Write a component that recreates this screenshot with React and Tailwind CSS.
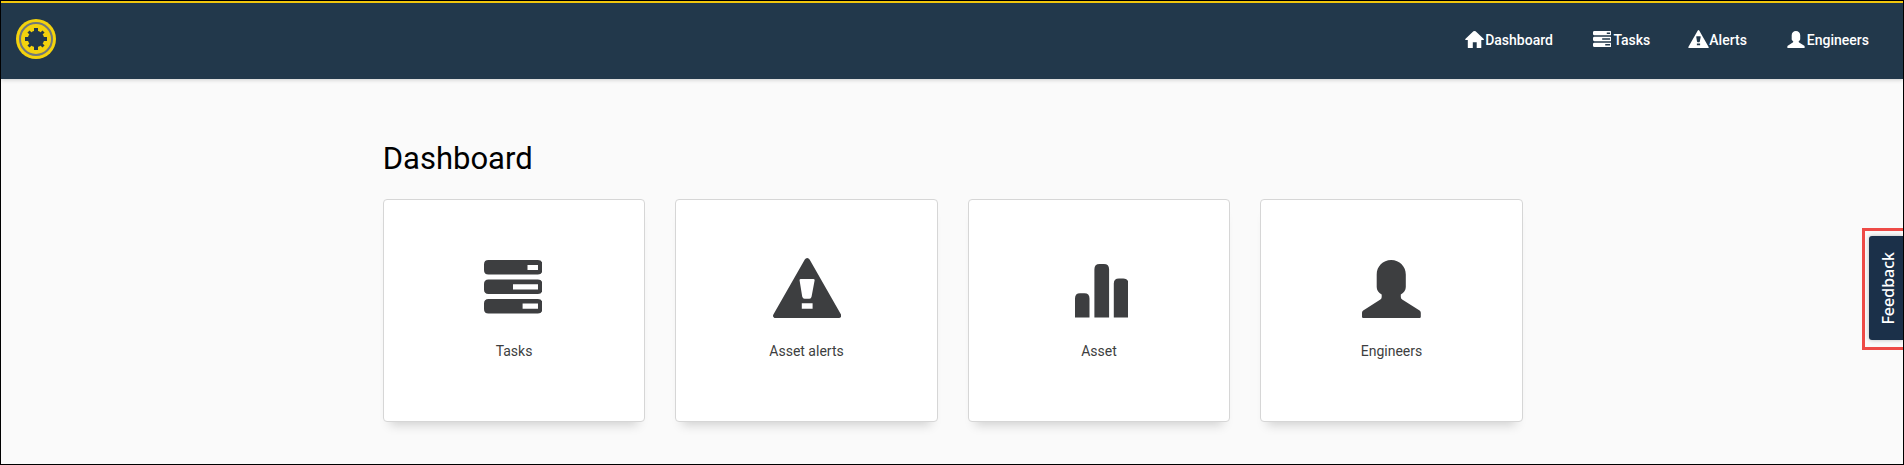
const HomeIcon = (p) => (
  <svg viewBox="0 0 19 17" {...p}>
    <path fill="currentColor" d="M9.5 0 L10.6 0.3 L18.8 8 Q19.2 9 18.2 9 H16.3 V16.5 Q16.3 17 15.8 17 H11.7 V11.3 H7.8 V17 H3.4 Q2.8 17 2.8 16.4 V9 H0.8 Q-0.2 9 0.3 8 L8.4 0.3 Z" />
  </svg>
);

const TasksIcon = (p) => (
  <svg viewBox="0 0 58.4 53.6" preserveAspectRatio="none" {...p}>
    <path
      fill="currentColor"
      fillRule="evenodd"
      d="M4.5 0H53.9Q58.4 0 58.4 4.5V10Q58.4 14.5 53.9 14.5H4.5Q0 14.5 0 10V4.5Q0 0 4.5 0ZM43.5 5V10H54V5ZM4.5 19.5H53.9Q58.4 19.5 58.4 24V29.5Q58.4 34 53.9 34H4.5Q0 34 0 29.5V24Q0 19.5 4.5 19.5ZM29 24.3V29.4H54V24.3ZM4.5 39H53.9Q58.4 39 58.4 43.5V49Q58.4 53.5 53.9 53.5H4.5Q0 53.5 0 49V43.5Q0 39 4.5 39ZM38.6 43.4V48.8H54V43.4Z"
    />
  </svg>
);

const AlertIcon = (p) => (
  <svg viewBox="0 0 68.4 60" {...p}>
    <path
      fill="currentColor"
      fillRule="evenodd"
      d="M34.2 0Q35.7 0 36.6 1.6L68 56.6Q69 58.4 67.4 59.6Q67 60 66.2 60H2.2Q1.4 60 .9 59.5Q-.6 58.4 .4 56.6L31.8 1.6Q32.7 0 34.2 0ZM27.8 21Q26.4 21 26.6 22.4L29.2 38.6Q29.8 40.8 31.6 40.8H36.4Q38.2 40.8 38.6 38.6L41.6 22.4Q41.8 21 40.4 21ZM28.8 45.2V50.8H39.6V45.2Z"
    />
  </svg>
);

const BarsIcon = (p) => (
  <svg viewBox="0 0 53.4 53.6" {...p}>
    <path
      fill="currentColor"
      d="M0 53.6V34.4Q0 29.2 5 29.2H9.4Q14.5 29.2 14.5 34.4V53.6ZM19.4 53.6V5.2Q19.4 0 24.6 0H28.9Q34.1 0 34.1 5.2V53.6ZM38.8 53.6V19.6Q38.8 14.6 44 14.6H48.2Q53.4 14.6 53.4 19.6V53.6Z"
    />
  </svg>
);

const UserIcon = (p) => (
  <svg viewBox="0 0 58.8 58" {...p}>
    <path
      fill="currentColor"
      d="M29.2 0C37.6 0 43.8 6.4 43.8 14.6V27C43.8 30.2 42 33 38.8 34.4V37Q38.8 38.6 40.2 39.4L57.6 50.6Q58.8 51.4 58.8 52.8V56.8Q58.8 58 57.6 58H1.2Q0 58 0 56.8V52.8Q0 51.4 1.2 50.6L18.4 39.4Q19.7 38.6 19.7 37V34.4C16.4 33 14.7 30.2 14.7 27V14.6C14.7 6.4 20.8 0 29.2 0Z"
    />
  </svg>
);

const TEETH = [0, 45, 90, 135, 180, 225, 270, 315];

const Logo = () => (
  <svg viewBox="-20 -20 40 40" className="size-10">
    <circle r="20" fill="#f3d20d" />
    <circle r="16" fill="none" stroke="#71777a" strokeWidth="2" />
    <g fill="#22384b">
      <circle r="8.2" />
      {TEETH.map((a) => (
        <rect key={a} x={a % 90 ? -1.5 : -2} y={a % 90 ? -10.6 : -11} width={a % 90 ? 3 : 4} height="5" transform={`rotate(${a})`} />
      ))}
    </g>
  </svg>
);

const cards = [
  { label: "Tasks", icon: <TasksIcon className="mr-0.5 mb-[4.4px] h-[53.6px] w-[58.4px]" /> },
  { label: "Asset alerts", icon: <AlertIcon className="ml-px h-[60px] w-[68.4px]" /> },
  { label: "Asset", icon: <BarsIcon className="ml-[5px] h-[53.6px] w-[53.4px]" /> },
  { label: "Engineers", icon: <UserIcon className="h-[58px] w-[58.8px]" /> },
];

export default function App() {
  return (
    <div className="relative flex h-[465px] w-[1904px] flex-col overflow-hidden border border-black bg-[#fafafa] font-['Roboto',sans-serif]">
      <header className="flex h-[78px] shrink-0 items-start justify-between border-t-2 border-[#f3c70d] bg-[#22384b] pl-[15px] text-white shadow-[0_1px_4px_rgba(0,0,0,0.18)]">
        <div className="pt-4">
          <Logo />
        </div>
        <nav className="flex pt-[27px] pr-[34px] text-sm leading-5 font-medium">
          <a className="mr-[40px] flex gap-px">
            <HomeIcon className="mt-px h-[17px] w-[19px]" />
            <span>Dashboard</span>
          </a>
          <a className="mr-[38px] flex gap-[2px]">
            <TasksIcon className="mt-px h-4 w-[18.5px]" />
            <span>Tasks</span>
          </a>
          <a className="mr-[40px] flex">
            <AlertIcon className="h-[18px] w-[21px]" />
            <span>Alerts</span>
          </a>
          <a className="flex gap-[2px]">
            <UserIcon className="mt-px h-[17px] w-[18px]" />
            <span>Engineers</span>
          </a>
        </nav>
      </header>
      <main className="ml-[381.75px] w-[1140px] pt-[63px]">
        <h1 className="text-[31px] leading-[34px] text-black">Dashboard</h1>
        <div className="mt-[23px] grid grid-cols-4 gap-[30px]">
          {cards.map((c) => (
            <div
              key={c.label}
              className="flex h-[223px] flex-col items-center rounded border border-[#d6d6d6] bg-white shadow-[0_10px_10px_-7px_rgba(0,0,0,0.17)]"
            >
              <div className="flex h-[118px] items-end text-[#3d3e40]">{c.icon}</div>
              <div className="mt-[23px] text-sm leading-5 text-[#3d3e40]">{c.label}</div>
            </div>
          ))}
        </div>
      </main>
      <div className="absolute top-[227px] right-[-4px] h-[122px] w-[45px] border-[3px] border-[#ee4a46]">
        <div className="mt-[5px] ml-1 flex h-[104px] w-[34px] items-center justify-center rounded-l-[3px] bg-[#1b3049] pl-1 shadow-[0_0_4px_rgba(0,0,0,0.25)]">
          <span className="rotate-180 font-['Noto_Sans',sans-serif] text-base leading-none font-medium text-white [writing-mode:vertical-rl]">
            Feedback
          </span>
        </div>
      </div>
    </div>
  );
}
